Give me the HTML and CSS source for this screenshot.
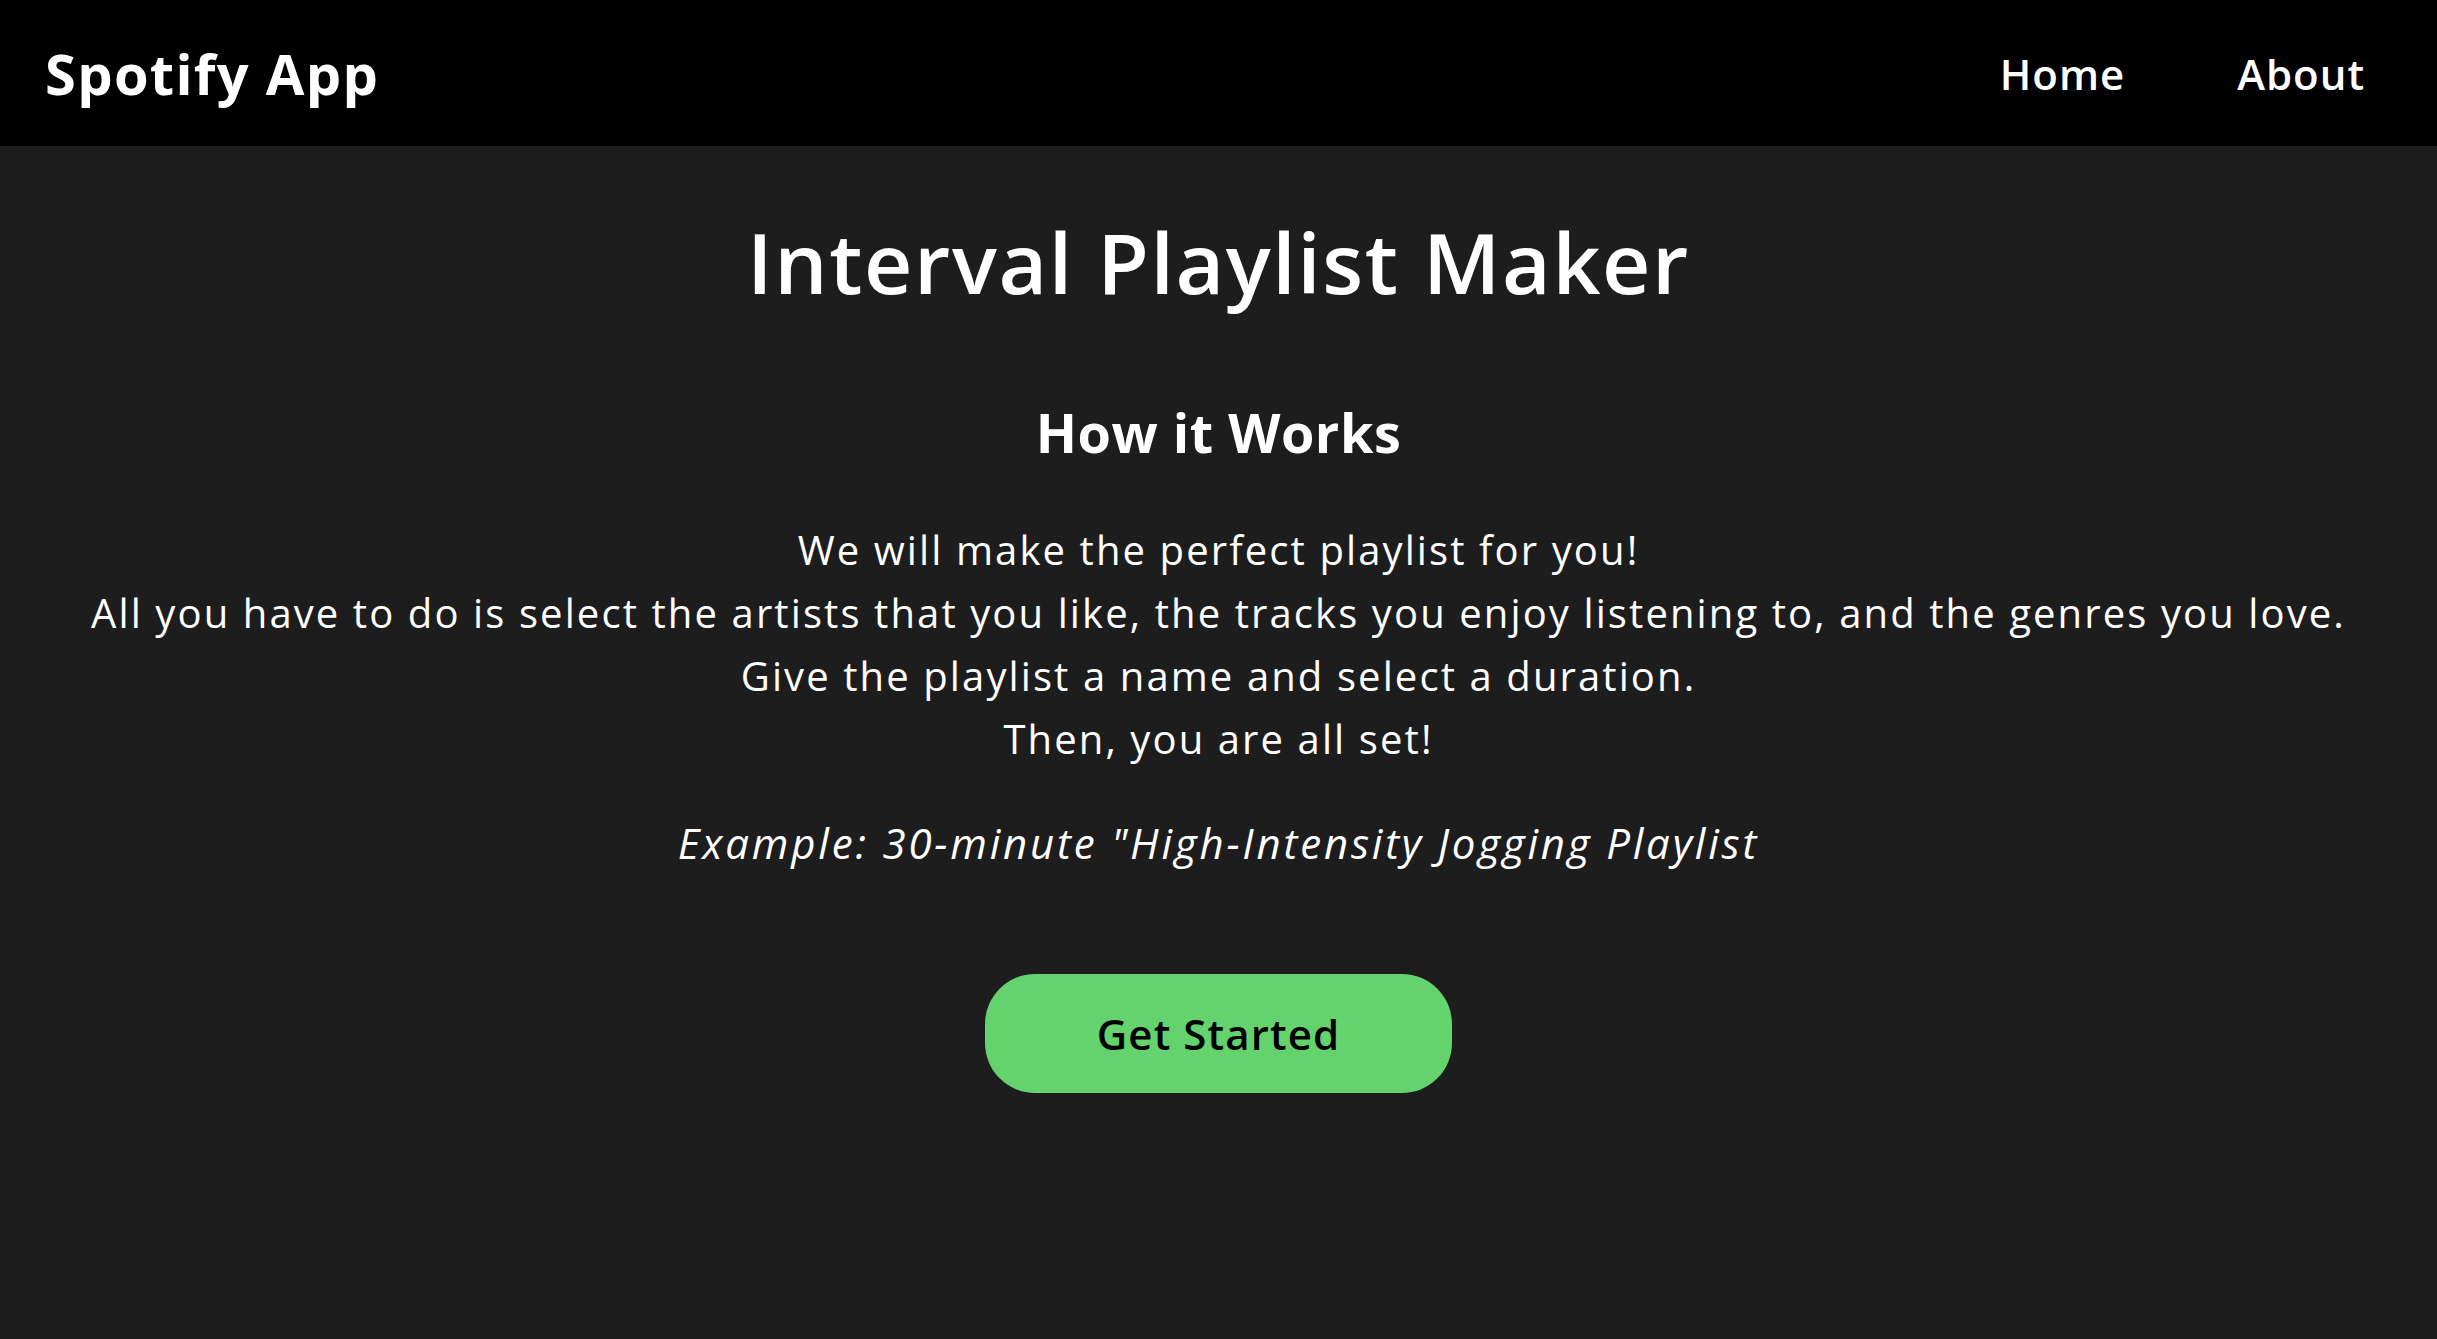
FILE: index.html
```html
<!DOCTYPE html>
<html lang="en">
<head>
<meta charset="utf-8">
<title>Spotify App</title>
<link rel="stylesheet" href="styles.css">
</head>
<body>
<header class="topbar">
  <div class="brand">Spotify App</div>
  <nav class="nav">
    <a class="nav-link" href="#">Home</a>
    <a class="nav-link" href="#">About</a>
  </nav>
</header>
<main class="hero">
  <h1 class="title">Interval Playlist Maker</h1>
  <h2 class="subtitle">How it Works</h2>
  <p class="desc">We will make the perfect playlist for you!<br>All you have to do is select the artists that you like, the tracks you enjoy listening to, and the genres you love.<br>Give the playlist a name and select a duration.<br>Then, you are all set!</p>
  <p class="example">Example: 30-minute "High-Intensity Jogging Playlist</p>
  <button class="cta">Get Started</button>
</main>
</body>
</html>
```
FILE: styles.css
```css
html, body {
  margin: 0;
  padding: 0;
}
body {
  background: #1d1d1d;
  color: #ffffff;
  font-family: "Open Sans", "Liberation Sans", sans-serif;
  min-height: 100vh;
}
.topbar {
  height: 146px;
  background: #000000;
  display: flex;
  align-items: center;
  justify-content: space-between;
  padding: 0 72px 0 45px;
  box-sizing: border-box;
}
.brand {
  font-size: 56px;
  font-weight: 700;
  line-height: 1;
  letter-spacing: 1.3px;
}
.nav {
  display: flex;
  gap: 112px;
}
.nav-link {
  color: #ffffff;
  text-decoration: none;
  font-size: 42px;
  font-weight: 600;
  letter-spacing: 1px;
}
.hero {
  display: flex;
  flex-direction: column;
  align-items: center;
  text-align: center;
}
.title {
  margin: 66px 0 0;
  font-size: 84px;
  font-weight: 600;
  line-height: 100px;
  letter-spacing: 1.6px;
}
.subtitle {
  margin: 85px 0 0;
  font-size: 54px;
  font-weight: 700;
  line-height: 70px;
  letter-spacing: 0.5px;
}
.desc {
  margin: 51px 0 0;
  font-size: 40px;
  line-height: 63px;
  letter-spacing: 2.1px;
}
.example {
  margin: 41px 0 0;
  font-size: 42px;
  font-style: italic;
  line-height: 63px;
  letter-spacing: 2.8px;
}
.cta {
  margin-top: 100px;
  width: 467px;
  height: 119px;
  border: none;
  border-radius: 50px;
  background: #64d36e;
  color: #000000;
  font-family: inherit;
  font-size: 42px;
  font-weight: 600;
  letter-spacing: 1.1px;
}
```
